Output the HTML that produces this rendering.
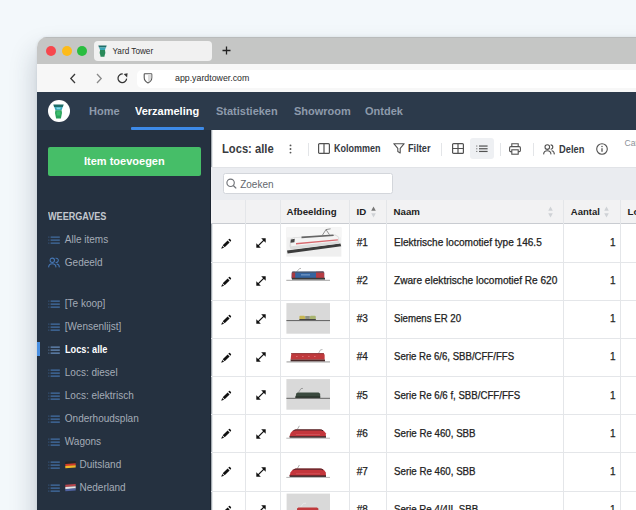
<!DOCTYPE html>
<html><head><meta charset="utf-8">
<style>
*{box-sizing:border-box;margin:0;padding:0}
html,body{width:636px;height:510px;overflow:hidden;background:#f3f8fb;font-family:"Liberation Sans",sans-serif}
.t{position:absolute;white-space:pre;line-height:1}
.r{position:absolute}
svg{position:absolute;overflow:visible}
#win{position:absolute;left:37px;top:37px;width:640px;height:520px;border-radius:10px;overflow:hidden;background:#fff;box-shadow:-2px 14px 26px rgba(30,45,70,.22),0 0 3px rgba(30,40,60,.10)}
#in{position:absolute;left:-37px;top:-37px;width:636px;height:510px}
</style></head><body>
<div id="win"><div id="in">
<div class="r" style="left:37px;top:37px;width:640px;height:27px;background:#c5c6c5;"></div>
<div class="r" style="left:37px;top:37px;width:640px;height:1px;background:#b9bbbb;"></div>
<div class="r" style="left:37px;top:63.5px;width:640px;height:1px;background:#b9b9b9;"></div>
<div class="r" style="left:46.2px;top:45.8px;width:10px;height:10px;border-radius:50%;background:#f7474d"></div>
<div class="r" style="left:61.8px;top:45.8px;width:10px;height:10px;border-radius:50%;background:#fdbb1a"></div>
<div class="r" style="left:77.3px;top:45.8px;width:10px;height:10px;border-radius:50%;background:#29bd3f"></div>
<div class="r" style="left:93.5px;top:41px;width:118.5px;height:20px;background:#f1f1f1;border-radius:4px"></div>
<svg style="left:98.2px;top:44.6px" width="9" height="12" viewBox="0 0 11 15"><path d="M0.3 0.6H10.7L9.9 3H1.1z" fill="#1f6d68"/><path d="M1.3 3H9.7L8.6 6.2H2.4z" fill="#38a7b8"/><path d="M2.4 6.2H8.6Q9.6 9.4 8.3 12.4L7.9 14.6H3.1L2.7 12.4Q1.4 9.4 2.4 6.2z" fill="#2a8a5a"/></svg>
<div class="t" style="left:112.5px;top:47.56px;font-size:8.2px;color:#2b2b2b;font-weight:normal;">Yard Tower</div>
<svg style="left:221.5px;top:46px" width="9" height="9" viewBox="0 0 9 9"><path d="M4.5 0.5v8M0.5 4.5h8" stroke="#222" stroke-width="1.3"/></svg>
<div class="r" style="left:37px;top:64px;width:640px;height:28px;background:#f7f7f7;"></div>
<div class="r" style="left:137px;top:69.5px;width:540px;height:18.5px;background:#ffffff;border-radius:5px"></div>
<div class="r" style="left:37px;top:91.5px;width:640px;height:1px;background:#e2e2e2;"></div>
<svg style="left:69px;top:73px" width="8" height="11" viewBox="0 0 8 11"><path d="M6 1L1.8 5.5L6 10" stroke="#3a3a3a" stroke-width="1.3" fill="none"/></svg>
<svg style="left:95px;top:73px" width="8" height="11" viewBox="0 0 8 11"><path d="M2 1L6.2 5.5L2 10" stroke="#8a8a8a" stroke-width="1.3" fill="none"/></svg>
<svg style="left:117.4px;top:73.2px" width="11" height="11" viewBox="0 0 11 11"><path d="M5.8 1.0A4.3 4.3 0 1 0 9.6 5.6" stroke="#333" stroke-width="1.25" fill="none"/><path d="M6.6 0.9L10.6 0.3L10.1 4.4z" fill="#333"/></svg>
<svg style="left:143px;top:73px" width="10" height="11" viewBox="0 0 10 11"><path d="M5 9.9C7.6 8.8 8.8 7 8.8 4.6V1.4Q8.8 0.8 8.2 0.8H1.8Q1.2 0.8 1.2 1.4V4.6C1.2 7 2.4 8.8 5 9.9z" fill="#fff" stroke="#555" stroke-width="1.1"/><path d="M5 1.3H8.3V4.6C8.3 6.8 7.3 8.3 5 9.3z" fill="#dcdcdc"/></svg>
<div class="t" style="left:175px;top:74.05px;font-size:8.8px;color:#2a2a2a;font-weight:normal;">app.yardtower.com</div>
<div class="r" style="left:37px;top:92px;width:640px;height:38px;background:#2c3a4b;"></div>
<div class="r" style="left:48px;top:100px;width:22px;height:22px;border-radius:50%;background:#fff"></div>
<svg style="left:53px;top:104px" width="11" height="15" viewBox="0 0 11 15"><path d="M0.3 0.6H10.7L9.9 3H1.1z" fill="#1f6d68"/><path d="M1.3 3H9.7L8.6 6.2H2.4z" fill="#38a7b8"/><path d="M3.4 3.6H7.6L7.2 5.2H3.8z" fill="#84d6e4"/><path d="M2.4 6.2H8.6Q9.6 9.4 8.3 12.4L7.9 14.6H3.1L2.7 12.4Q1.4 9.4 2.4 6.2z" fill="#2aa05a"/><path d="M3.6 7.2H7.4Q7.8 9.6 7.1 11.6H3.9Q3.2 9.6 3.6 7.2z" fill="#3cbd6c"/></svg>
<div class="t" style="left:88.5px;top:105.95px;font-size:11.4px;color:#8e9aab;font-weight:bold;transform:scaleX(0.965);transform-origin:0 0">Home</div>
<div class="t" style="left:135.3px;top:105.95px;font-size:11.4px;color:#ffffff;font-weight:bold;transform:scaleX(0.965);transform-origin:0 0">Verzameling</div>
<div class="t" style="left:216.2px;top:105.95px;font-size:11.4px;color:#8e9aab;font-weight:bold;transform:scaleX(0.965);transform-origin:0 0">Statistieken</div>
<div class="t" style="left:293.8px;top:105.95px;font-size:11.4px;color:#8e9aab;font-weight:bold;transform:scaleX(0.965);transform-origin:0 0">Showroom</div>
<div class="t" style="left:365px;top:105.95px;font-size:11.4px;color:#8e9aab;font-weight:bold;transform:scaleX(0.965);transform-origin:0 0">Ontdek</div>
<div class="r" style="left:131px;top:127px;width:73px;height:3px;background:#3d8ae8;border-radius:1px"></div>
<div class="r" style="left:37px;top:130px;width:174px;height:400px;background:#253140;"></div>
<div class="r" style="left:48px;top:146.7px;width:153px;height:29.3px;background:#46be68;border-radius:2px"></div>
<div class="t" style="left:84px;top:156.09px;font-size:11px;color:#ffffff;font-weight:bold;">Item toevoegen</div>
<div class="t" style="left:48.2px;top:211.50px;font-size:10.4px;color:#c3c8cf;font-weight:bold;transform:scaleX(0.875);transform-origin:0 0">WEERGAVES</div>
<svg style="left:48.2px;top:236px" width="12" height="8" viewBox="0 0 12 8"><rect x="0.2" y="0.6000000000000001" width="1.2" height="1" fill="#4a7cb8" opacity="0.55"/><rect x="2.6" y="0.6000000000000001" width="9.2" height="1" fill="#4a7cb8"/><rect x="0.2" y="3.5999999999999996" width="1.2" height="1" fill="#4a7cb8" opacity="0.55"/><rect x="2.6" y="3.5999999999999996" width="9.2" height="1" fill="#4a7cb8"/><rect x="0.2" y="6.6" width="1.2" height="1" fill="#4a7cb8" opacity="0.55"/><rect x="2.6" y="6.6" width="9.2" height="1" fill="#4a7cb8"/></svg>
<div class="t" style="left:64.8px;top:235.03px;font-size:10px;color:#a4acb7;font-weight:normal;">Alle items</div>
<svg style="left:48px;top:257.4px" width="12" height="11" viewBox="0 0 12 11"><g stroke="#4677b5" stroke-width="1.05" fill="none"><circle cx="4.3" cy="3.3" r="2.2"/><path d="M7.6 1.3A2.1 2.1 0 1 1 7.6 5.3"/><path d="M0.6 10.4Q0.8 6.8 4.3 6.8Q7.8 6.8 8 10.4"/><path d="M8.6 6.9Q11.2 7.1 11.4 10.4"/></g></svg>
<div class="t" style="left:64.8px;top:257.54px;font-size:10px;color:#a4acb7;font-weight:normal;">Gedeeld</div>
<svg style="left:48.2px;top:300.0px" width="12" height="8" viewBox="0 0 12 8"><rect x="0.2" y="0.6000000000000001" width="1.2" height="1" fill="#4b80c0" opacity="0.55"/><rect x="2.6" y="0.6000000000000001" width="9.2" height="1" fill="#4b80c0"/><rect x="0.2" y="3.5999999999999996" width="1.2" height="1" fill="#4b80c0" opacity="0.55"/><rect x="2.6" y="3.5999999999999996" width="9.2" height="1" fill="#4b80c0"/><rect x="0.2" y="6.6" width="1.2" height="1" fill="#4b80c0" opacity="0.55"/><rect x="2.6" y="6.6" width="9.2" height="1" fill="#4b80c0"/></svg>
<div class="t" style="left:64.8px;top:298.54px;font-size:10px;color:#a4acb7;font-weight:normal;">[Te koop]</div>
<svg style="left:48.2px;top:323.0px" width="12" height="8" viewBox="0 0 12 8"><rect x="0.2" y="0.6000000000000001" width="1.2" height="1" fill="#4b80c0" opacity="0.55"/><rect x="2.6" y="0.6000000000000001" width="9.2" height="1" fill="#4b80c0"/><rect x="0.2" y="3.5999999999999996" width="1.2" height="1" fill="#4b80c0" opacity="0.55"/><rect x="2.6" y="3.5999999999999996" width="9.2" height="1" fill="#4b80c0"/><rect x="0.2" y="6.6" width="1.2" height="1" fill="#4b80c0" opacity="0.55"/><rect x="2.6" y="6.6" width="9.2" height="1" fill="#4b80c0"/></svg>
<div class="t" style="left:64.8px;top:321.54px;font-size:10px;color:#a4acb7;font-weight:normal;">[Wensenlijst]</div>
<svg style="left:48.2px;top:346.0px" width="12" height="8" viewBox="0 0 12 8"><rect x="0.2" y="0.6000000000000001" width="1.2" height="1" fill="#7aa6dc" opacity="0.55"/><rect x="2.6" y="0.6000000000000001" width="9.2" height="1" fill="#7aa6dc"/><rect x="0.2" y="3.5999999999999996" width="1.2" height="1" fill="#7aa6dc" opacity="0.55"/><rect x="2.6" y="3.5999999999999996" width="9.2" height="1" fill="#7aa6dc"/><rect x="0.2" y="6.6" width="1.2" height="1" fill="#7aa6dc" opacity="0.55"/><rect x="2.6" y="6.6" width="9.2" height="1" fill="#7aa6dc"/></svg>
<div class="t" style="left:64.6px;top:344.54px;font-size:10px;color:#ffffff;font-weight:bold;transform:scaleX(0.92);transform-origin:0 0">Locs: alle</div>
<div class="r" style="left:37px;top:342px;width:2.7px;height:13.5px;background:#4a90e2;"></div>
<svg style="left:48.2px;top:369.0px" width="12" height="8" viewBox="0 0 12 8"><rect x="0.2" y="0.6000000000000001" width="1.2" height="1" fill="#4b80c0" opacity="0.55"/><rect x="2.6" y="0.6000000000000001" width="9.2" height="1" fill="#4b80c0"/><rect x="0.2" y="3.5999999999999996" width="1.2" height="1" fill="#4b80c0" opacity="0.55"/><rect x="2.6" y="3.5999999999999996" width="9.2" height="1" fill="#4b80c0"/><rect x="0.2" y="6.6" width="1.2" height="1" fill="#4b80c0" opacity="0.55"/><rect x="2.6" y="6.6" width="9.2" height="1" fill="#4b80c0"/></svg>
<div class="t" style="left:64.8px;top:367.54px;font-size:10px;color:#a4acb7;font-weight:normal;">Locs: diesel</div>
<svg style="left:48.2px;top:392.0px" width="12" height="8" viewBox="0 0 12 8"><rect x="0.2" y="0.6000000000000001" width="1.2" height="1" fill="#4b80c0" opacity="0.55"/><rect x="2.6" y="0.6000000000000001" width="9.2" height="1" fill="#4b80c0"/><rect x="0.2" y="3.5999999999999996" width="1.2" height="1" fill="#4b80c0" opacity="0.55"/><rect x="2.6" y="3.5999999999999996" width="9.2" height="1" fill="#4b80c0"/><rect x="0.2" y="6.6" width="1.2" height="1" fill="#4b80c0" opacity="0.55"/><rect x="2.6" y="6.6" width="9.2" height="1" fill="#4b80c0"/></svg>
<div class="t" style="left:64.8px;top:390.54px;font-size:10px;color:#a4acb7;font-weight:normal;">Locs: elektrisch</div>
<svg style="left:48.2px;top:415.0px" width="12" height="8" viewBox="0 0 12 8"><rect x="0.2" y="0.6000000000000001" width="1.2" height="1" fill="#4b80c0" opacity="0.55"/><rect x="2.6" y="0.6000000000000001" width="9.2" height="1" fill="#4b80c0"/><rect x="0.2" y="3.5999999999999996" width="1.2" height="1" fill="#4b80c0" opacity="0.55"/><rect x="2.6" y="3.5999999999999996" width="9.2" height="1" fill="#4b80c0"/><rect x="0.2" y="6.6" width="1.2" height="1" fill="#4b80c0" opacity="0.55"/><rect x="2.6" y="6.6" width="9.2" height="1" fill="#4b80c0"/></svg>
<div class="t" style="left:64.8px;top:413.54px;font-size:10px;color:#a4acb7;font-weight:normal;">Onderhoudsplan</div>
<svg style="left:48.2px;top:438.0px" width="12" height="8" viewBox="0 0 12 8"><rect x="0.2" y="0.6000000000000001" width="1.2" height="1" fill="#4b80c0" opacity="0.55"/><rect x="2.6" y="0.6000000000000001" width="9.2" height="1" fill="#4b80c0"/><rect x="0.2" y="3.5999999999999996" width="1.2" height="1" fill="#4b80c0" opacity="0.55"/><rect x="2.6" y="3.5999999999999996" width="9.2" height="1" fill="#4b80c0"/><rect x="0.2" y="6.6" width="1.2" height="1" fill="#4b80c0" opacity="0.55"/><rect x="2.6" y="6.6" width="9.2" height="1" fill="#4b80c0"/></svg>
<div class="t" style="left:64.8px;top:436.54px;font-size:10px;color:#a4acb7;font-weight:normal;">Wagons</div>
<svg style="left:48.2px;top:461.0px" width="12" height="8" viewBox="0 0 12 8"><rect x="0.2" y="0.6000000000000001" width="1.2" height="1" fill="#4b80c0" opacity="0.55"/><rect x="2.6" y="0.6000000000000001" width="9.2" height="1" fill="#4b80c0"/><rect x="0.2" y="3.5999999999999996" width="1.2" height="1" fill="#4b80c0" opacity="0.55"/><rect x="2.6" y="3.5999999999999996" width="9.2" height="1" fill="#4b80c0"/><rect x="0.2" y="6.6" width="1.2" height="1" fill="#4b80c0" opacity="0.55"/><rect x="2.6" y="6.6" width="9.2" height="1" fill="#4b80c0"/></svg>
<svg style="left:65px;top:460.6px" width="11" height="7.5" viewBox="0 0 11 7.5"><g transform="skewY(-4) translate(0 0.6)"><rect x="0.3" y="0.2" width="10.4" height="2.2" fill="#262626"/><rect x="0.3" y="2.35" width="10.4" height="2.2" fill="#d23a2a"/><rect x="0.3" y="4.5" width="10.4" height="2.2" fill="#f0b828"/></g></svg>
<div class="t" style="left:79.5px;top:459.54px;font-size:10px;color:#a4acb7;font-weight:normal;">Duitsland</div>
<svg style="left:48.2px;top:484.0px" width="12" height="8" viewBox="0 0 12 8"><rect x="0.2" y="0.6000000000000001" width="1.2" height="1" fill="#4b80c0" opacity="0.55"/><rect x="2.6" y="0.6000000000000001" width="9.2" height="1" fill="#4b80c0"/><rect x="0.2" y="3.5999999999999996" width="1.2" height="1" fill="#4b80c0" opacity="0.55"/><rect x="2.6" y="3.5999999999999996" width="9.2" height="1" fill="#4b80c0"/><rect x="0.2" y="6.6" width="1.2" height="1" fill="#4b80c0" opacity="0.55"/><rect x="2.6" y="6.6" width="9.2" height="1" fill="#4b80c0"/></svg>
<svg style="left:65px;top:483.6px" width="11" height="7.5" viewBox="0 0 11 7.5"><g transform="skewY(-4) translate(0 0.6)"><rect x="0.3" y="0.2" width="10.4" height="2.2" fill="#b8454c"/><rect x="0.3" y="2.35" width="10.4" height="2.2" fill="#e6e6e6"/><rect x="0.3" y="4.5" width="10.4" height="2.2" fill="#4f62a0"/></g></svg>
<div class="t" style="left:79.5px;top:482.54px;font-size:10px;color:#a4acb7;font-weight:normal;">Nederland</div>
<div class="r" style="left:211px;top:130px;width:430px;height:400px;background:#ffffff;"></div>
<div class="r" style="left:209.5px;top:130px;width:1.5px;height:400px;background:#1c2430;"></div>
<div class="r" style="left:211px;top:130px;width:1px;height:400px;background:#a3aab0;"></div>
<div class="r" style="left:212px;top:130px;width:1px;height:400px;background:rgba(200,206,212,.45);"></div>
<div class="t" style="left:222.2px;top:143.19px;font-size:12.3px;color:#383b40;font-weight:bold;transform:scaleX(0.91);transform-origin:0 0">Locs: alle</div>
<svg style="left:289px;top:143.5px" width="3" height="10" viewBox="0 0 3 10"><circle cx="1.5" cy="1.4" r="0.95" fill="#555"/><circle cx="1.5" cy="5" r="0.95" fill="#555"/><circle cx="1.5" cy="8.6" r="0.95" fill="#555"/></svg>
<div class="r" style="left:307.5px;top:142.5px;width:1px;height:13px;background:#e3e5e8;"></div>
<div class="r" style="left:441.2px;top:142.5px;width:1px;height:13px;background:#e3e5e8;"></div>
<div class="r" style="left:499.5px;top:142.5px;width:1px;height:13px;background:#e3e5e8;"></div>
<div class="r" style="left:532.8px;top:142.5px;width:1px;height:13px;background:#e3e5e8;"></div>
<svg style="left:318.4px;top:143.4px" width="12" height="11" viewBox="0 0 12 11"><rect x="0.6" y="0.6" width="10.8" height="9.8" rx="1" stroke="#525252" stroke-width="1.2" fill="none"/><path d="M6 0.6v9.8" stroke="#525252" stroke-width="1.2"/></svg>
<div class="t" style="left:333.8px;top:144.44px;font-size:10px;color:#35393f;font-weight:bold;transform:scaleX(0.90);transform-origin:0 0">Kolommen</div>
<svg style="left:392.5px;top:143.4px" width="12" height="11" viewBox="0 0 12 11"><path d="M0.8 0.7h10.4L7.2 5.4v4.6L4.8 8.6V5.4z" stroke="#525252" stroke-width="1.1" fill="none" stroke-linejoin="round"/></svg>
<div class="t" style="left:407.5px;top:144.44px;font-size:10px;color:#35393f;font-weight:bold;transform:scaleX(0.92);transform-origin:0 0">Filter</div>
<svg style="left:452.3px;top:143.4px" width="12" height="11" viewBox="0 0 12 11"><rect x="0.6" y="0.6" width="10.8" height="9.8" rx="1" stroke="#525252" stroke-width="1.2" fill="none"/><path d="M6 0.6v9.8M0.6 5.5h10.8" stroke="#525252" stroke-width="1.2"/></svg>
<div class="r" style="left:470.2px;top:137.5px;width:23.8px;height:21.5px;background:#eef0f3;border-radius:3px"></div>
<svg style="left:476px;top:145px" width="12" height="8" viewBox="0 0 12 8"><g fill="#525252"><rect x="0" y="0.5" width="1.4" height="1.1" opacity="0.6"/><rect x="3" y="0.45" width="8.6" height="1.2"/><rect x="0" y="3.2" width="1.4" height="1.1" opacity="0.6"/><rect x="3" y="3.15" width="8.6" height="1.2"/><rect x="0" y="5.9" width="1.4" height="1.1" opacity="0.6"/><rect x="3" y="5.85" width="8.6" height="1.2"/></g></svg>
<svg style="left:509.3px;top:143px" width="12" height="12" viewBox="0 0 12 12"><path d="M2.8 3.6V0.8h6.4v2.8" stroke="#525252" stroke-width="1.1" fill="none"/><rect x="0.6" y="3.6" width="10.8" height="5" rx="1.2" stroke="#525252" stroke-width="1.1" fill="none"/><rect x="2.8" y="6.8" width="6.4" height="4.4" stroke="#525252" stroke-width="1.1" fill="#fff"/></svg>
<svg style="left:543.2px;top:143.6px" width="12" height="11" viewBox="0 0 12 11"><g stroke="#525252" stroke-width="1.1" fill="none"><circle cx="4.3" cy="3.1" r="2.3"/><path d="M7.6 0.9A2.2 2.2 0 1 1 7.6 5.3"/><path d="M0.6 10.4Q0.8 6.7 4.3 6.7Q7.8 6.7 8 10.4"/><path d="M8.6 6.8Q11.2 7 11.4 10.4"/></g></svg>
<div class="t" style="left:558.6px;top:145.03px;font-size:10px;color:#35393f;font-weight:bold;transform:scaleX(0.93);transform-origin:0 0">Delen</div>
<svg style="left:595.6px;top:143.2px" width="12" height="12" viewBox="0 0 12 12"><circle cx="6" cy="6" r="5.3" stroke="#525252" stroke-width="1.1" fill="none"/><path d="M6 5.2v3.6" stroke="#525252" stroke-width="1.3"/><circle cx="6" cy="3.4" r="0.75" fill="#525252"/></svg>
<div class="t" style="left:624.5px;top:138.92px;font-size:8.6px;color:#8c9198;font-weight:normal;">Cat</div>
<div class="r" style="left:211px;top:167.4px;width:430px;height:32.8px;background:#eaecf0;"></div>
<div class="r" style="left:211px;top:167.4px;width:430px;height:1px;background:#e1e3e7;"></div>
<div class="r" style="left:222.6px;top:173.4px;width:170.8px;height:20.6px;background:#ffffff;border:1px solid #d3d6db;border-radius:2.5px"></div>
<svg style="left:226px;top:178px" width="11" height="11" viewBox="0 0 11 11"><circle cx="4.6" cy="4.8" r="3.7" stroke="#707378" stroke-width="1.15" fill="none"/><path d="M7.3 7.5L10.2 10.4" stroke="#707378" stroke-width="1.3"/></svg>
<div class="t" style="left:240.2px;top:179.84px;font-size:10px;color:#63676d;font-weight:normal;">Zoeken</div>
<div class="r" style="left:211px;top:200.2px;width:430px;height:23.3px;background:#f2f2f3;"></div>
<div class="r" style="left:211px;top:222.5px;width:430px;height:1.4px;background:#c9ccd1;"></div>
<div class="t" style="left:286.5px;top:206.59px;font-size:9.7px;color:#222;font-weight:bold;">Afbeelding</div>
<div class="t" style="left:356.6px;top:206.59px;font-size:9.7px;color:#222;font-weight:bold;">ID</div>
<svg style="left:370.5px;top:205.5px" width="5" height="12" viewBox="0 0 5 12"><path d="M2.5 0.5L4.8 4.8H0.2z" fill="#777"/><path d="M2.5 11.5L4.8 7.2H0.2z" fill="#cfd2d6"/></svg>
<div class="t" style="left:393.6px;top:206.59px;font-size:9.7px;color:#222;font-weight:bold;">Naam</div>
<svg style="left:547.5px;top:205.5px" width="5" height="12" viewBox="0 0 5 12"><path d="M2.5 0.5L4.8 4.8H0.2z" fill="#cfd2d6"/><path d="M2.5 11.5L4.8 7.2H0.2z" fill="#cfd2d6"/></svg>
<div class="t" style="left:570.8px;top:206.76px;font-size:9.5px;color:#222;font-weight:bold;">Aantal</div>
<svg style="left:604.3px;top:205.5px" width="5" height="12" viewBox="0 0 5 12"><path d="M2.5 0.5L4.8 4.8H0.2z" fill="#cfd2d6"/><path d="M2.5 11.5L4.8 7.2H0.2z" fill="#cfd2d6"/></svg>
<div class="t" style="left:627.6px;top:206.59px;font-size:9.7px;color:#222;font-weight:bold;">Lo</div>
<svg style="left:220.6px;top:238.50px" width="10" height="10" viewBox="0 0 10 10"><path d="M1.7 6.3L6.6 1.4L8.6 3.4L3.7 8.3z" fill="#111"/><path d="M1.3 6.9L3.1 8.7L0.2 9.8z" fill="#111"/><path d="M7.3 0.7L8 0Q8.5 -0.4 9 0.1L9.9 1Q10.4 1.5 10 2L9.3 2.7z" fill="#111"/></svg>
<svg style="left:255.7px;top:237.80px" width="10" height="10" viewBox="0 0 10 10"><path d="M1.6 8.4L8.4 1.6" stroke="#111" stroke-width="1.3"/><path d="M5.2 0.3H9.7V4.8z" fill="#111"/><path d="M0.3 5.2V9.7H4.8z" fill="#111"/></svg>
<div class="t" style="left:356.7px;top:237.94px;font-size:10px;color:#222;font-weight:normal;-webkit-text-stroke:0.25px #222">#1</div>
<div class="t" style="left:393.7px;top:237.94px;font-size:10px;color:#222;font-weight:normal;-webkit-text-stroke:0.25px #222;transform:scaleX(1.007);transform-origin:0 0">Elektrische locomotief type 146.5</div>
<div class="t" style="left:610px;top:237.94px;font-size:10px;color:#222;font-weight:normal;-webkit-text-stroke:0.25px #222">1</div>
<div class="r" style="left:211px;top:261.56px;width:430px;height:1px;background:#e4e6e9;"></div>
<svg style="left:220.6px;top:276.66px" width="10" height="10" viewBox="0 0 10 10"><path d="M1.7 6.3L6.6 1.4L8.6 3.4L3.7 8.3z" fill="#111"/><path d="M1.3 6.9L3.1 8.7L0.2 9.8z" fill="#111"/><path d="M7.3 0.7L8 0Q8.5 -0.4 9 0.1L9.9 1Q10.4 1.5 10 2L9.3 2.7z" fill="#111"/></svg>
<svg style="left:255.7px;top:275.96px" width="10" height="10" viewBox="0 0 10 10"><path d="M1.6 8.4L8.4 1.6" stroke="#111" stroke-width="1.3"/><path d="M5.2 0.3H9.7V4.8z" fill="#111"/><path d="M0.3 5.2V9.7H4.8z" fill="#111"/></svg>
<div class="t" style="left:356.7px;top:276.10px;font-size:10px;color:#222;font-weight:normal;-webkit-text-stroke:0.25px #222">#2</div>
<div class="t" style="left:393.7px;top:276.10px;font-size:10px;color:#222;font-weight:normal;-webkit-text-stroke:0.25px #222;transform:scaleX(1.010);transform-origin:0 0">Zware elektrische locomotief Re 620</div>
<div class="t" style="left:610px;top:276.10px;font-size:10px;color:#222;font-weight:normal;-webkit-text-stroke:0.25px #222">1</div>
<div class="r" style="left:211px;top:299.72px;width:430px;height:1px;background:#e4e6e9;"></div>
<svg style="left:220.6px;top:314.82px" width="10" height="10" viewBox="0 0 10 10"><path d="M1.7 6.3L6.6 1.4L8.6 3.4L3.7 8.3z" fill="#111"/><path d="M1.3 6.9L3.1 8.7L0.2 9.8z" fill="#111"/><path d="M7.3 0.7L8 0Q8.5 -0.4 9 0.1L9.9 1Q10.4 1.5 10 2L9.3 2.7z" fill="#111"/></svg>
<svg style="left:255.7px;top:314.12px" width="10" height="10" viewBox="0 0 10 10"><path d="M1.6 8.4L8.4 1.6" stroke="#111" stroke-width="1.3"/><path d="M5.2 0.3H9.7V4.8z" fill="#111"/><path d="M0.3 5.2V9.7H4.8z" fill="#111"/></svg>
<div class="t" style="left:356.7px;top:314.26px;font-size:10px;color:#222;font-weight:normal;-webkit-text-stroke:0.25px #222">#3</div>
<div class="t" style="left:393.7px;top:314.26px;font-size:10px;color:#222;font-weight:normal;-webkit-text-stroke:0.25px #222;transform:scaleX(0.965);transform-origin:0 0">Siemens ER 20</div>
<div class="t" style="left:610px;top:314.26px;font-size:10px;color:#222;font-weight:normal;-webkit-text-stroke:0.25px #222">1</div>
<div class="r" style="left:211px;top:337.88px;width:430px;height:1px;background:#e4e6e9;"></div>
<svg style="left:220.6px;top:352.98px" width="10" height="10" viewBox="0 0 10 10"><path d="M1.7 6.3L6.6 1.4L8.6 3.4L3.7 8.3z" fill="#111"/><path d="M1.3 6.9L3.1 8.7L0.2 9.8z" fill="#111"/><path d="M7.3 0.7L8 0Q8.5 -0.4 9 0.1L9.9 1Q10.4 1.5 10 2L9.3 2.7z" fill="#111"/></svg>
<svg style="left:255.7px;top:352.28px" width="10" height="10" viewBox="0 0 10 10"><path d="M1.6 8.4L8.4 1.6" stroke="#111" stroke-width="1.3"/><path d="M5.2 0.3H9.7V4.8z" fill="#111"/><path d="M0.3 5.2V9.7H4.8z" fill="#111"/></svg>
<div class="t" style="left:356.7px;top:352.42px;font-size:10px;color:#222;font-weight:normal;-webkit-text-stroke:0.25px #222">#4</div>
<div class="t" style="left:393.7px;top:352.42px;font-size:10px;color:#222;font-weight:normal;-webkit-text-stroke:0.25px #222;transform:scaleX(0.960);transform-origin:0 0">Serie Re 6/6, SBB/CFF/FFS</div>
<div class="t" style="left:610px;top:352.42px;font-size:10px;color:#222;font-weight:normal;-webkit-text-stroke:0.25px #222">1</div>
<div class="r" style="left:211px;top:376.03999999999996px;width:430px;height:1px;background:#e4e6e9;"></div>
<svg style="left:220.6px;top:391.14px" width="10" height="10" viewBox="0 0 10 10"><path d="M1.7 6.3L6.6 1.4L8.6 3.4L3.7 8.3z" fill="#111"/><path d="M1.3 6.9L3.1 8.7L0.2 9.8z" fill="#111"/><path d="M7.3 0.7L8 0Q8.5 -0.4 9 0.1L9.9 1Q10.4 1.5 10 2L9.3 2.7z" fill="#111"/></svg>
<svg style="left:255.7px;top:390.44px" width="10" height="10" viewBox="0 0 10 10"><path d="M1.6 8.4L8.4 1.6" stroke="#111" stroke-width="1.3"/><path d="M5.2 0.3H9.7V4.8z" fill="#111"/><path d="M0.3 5.2V9.7H4.8z" fill="#111"/></svg>
<div class="t" style="left:356.7px;top:390.57px;font-size:10px;color:#222;font-weight:normal;-webkit-text-stroke:0.25px #222">#5</div>
<div class="t" style="left:393.7px;top:390.57px;font-size:10px;color:#222;font-weight:normal;-webkit-text-stroke:0.25px #222;transform:scaleX(0.966);transform-origin:0 0">Serie Re 6/6 f, SBB/CFF/FFS</div>
<div class="t" style="left:610px;top:390.57px;font-size:10px;color:#222;font-weight:normal;-webkit-text-stroke:0.25px #222">1</div>
<div class="r" style="left:211px;top:414.2px;width:430px;height:1px;background:#e4e6e9;"></div>
<svg style="left:220.6px;top:429.30px" width="10" height="10" viewBox="0 0 10 10"><path d="M1.7 6.3L6.6 1.4L8.6 3.4L3.7 8.3z" fill="#111"/><path d="M1.3 6.9L3.1 8.7L0.2 9.8z" fill="#111"/><path d="M7.3 0.7L8 0Q8.5 -0.4 9 0.1L9.9 1Q10.4 1.5 10 2L9.3 2.7z" fill="#111"/></svg>
<svg style="left:255.7px;top:428.60px" width="10" height="10" viewBox="0 0 10 10"><path d="M1.6 8.4L8.4 1.6" stroke="#111" stroke-width="1.3"/><path d="M5.2 0.3H9.7V4.8z" fill="#111"/><path d="M0.3 5.2V9.7H4.8z" fill="#111"/></svg>
<div class="t" style="left:356.7px;top:428.74px;font-size:10px;color:#222;font-weight:normal;-webkit-text-stroke:0.25px #222">#6</div>
<div class="t" style="left:393.7px;top:428.74px;font-size:10px;color:#222;font-weight:normal;-webkit-text-stroke:0.25px #222;transform:scaleX(0.972);transform-origin:0 0">Serie Re 460, SBB</div>
<div class="t" style="left:610px;top:428.74px;font-size:10px;color:#222;font-weight:normal;-webkit-text-stroke:0.25px #222">1</div>
<div class="r" style="left:211px;top:452.36px;width:430px;height:1px;background:#e4e6e9;"></div>
<svg style="left:220.6px;top:467.46px" width="10" height="10" viewBox="0 0 10 10"><path d="M1.7 6.3L6.6 1.4L8.6 3.4L3.7 8.3z" fill="#111"/><path d="M1.3 6.9L3.1 8.7L0.2 9.8z" fill="#111"/><path d="M7.3 0.7L8 0Q8.5 -0.4 9 0.1L9.9 1Q10.4 1.5 10 2L9.3 2.7z" fill="#111"/></svg>
<svg style="left:255.7px;top:466.76px" width="10" height="10" viewBox="0 0 10 10"><path d="M1.6 8.4L8.4 1.6" stroke="#111" stroke-width="1.3"/><path d="M5.2 0.3H9.7V4.8z" fill="#111"/><path d="M0.3 5.2V9.7H4.8z" fill="#111"/></svg>
<div class="t" style="left:356.7px;top:466.90px;font-size:10px;color:#222;font-weight:normal;-webkit-text-stroke:0.25px #222">#7</div>
<div class="t" style="left:393.7px;top:466.90px;font-size:10px;color:#222;font-weight:normal;-webkit-text-stroke:0.25px #222;transform:scaleX(0.972);transform-origin:0 0">Serie Re 460, SBB</div>
<div class="t" style="left:610px;top:466.90px;font-size:10px;color:#222;font-weight:normal;-webkit-text-stroke:0.25px #222">1</div>
<div class="r" style="left:211px;top:490.52px;width:430px;height:1px;background:#e4e6e9;"></div>
<svg style="left:220.6px;top:505.62px" width="10" height="10" viewBox="0 0 10 10"><path d="M1.7 6.3L6.6 1.4L8.6 3.4L3.7 8.3z" fill="#111"/><path d="M1.3 6.9L3.1 8.7L0.2 9.8z" fill="#111"/><path d="M7.3 0.7L8 0Q8.5 -0.4 9 0.1L9.9 1Q10.4 1.5 10 2L9.3 2.7z" fill="#111"/></svg>
<svg style="left:255.7px;top:504.92px" width="10" height="10" viewBox="0 0 10 10"><path d="M1.6 8.4L8.4 1.6" stroke="#111" stroke-width="1.3"/><path d="M5.2 0.3H9.7V4.8z" fill="#111"/><path d="M0.3 5.2V9.7H4.8z" fill="#111"/></svg>
<div class="t" style="left:356.7px;top:505.06px;font-size:10px;color:#222;font-weight:normal;-webkit-text-stroke:0.25px #222">#8</div>
<div class="t" style="left:393.7px;top:505.06px;font-size:10px;color:#222;font-weight:normal;-webkit-text-stroke:0.25px #222;transform:scaleX(0.970);transform-origin:0 0">Serie Re 4/4II, SBB</div>
<div class="t" style="left:610px;top:505.06px;font-size:10px;color:#222;font-weight:normal;-webkit-text-stroke:0.25px #222">1</div>
<div class="r" style="left:245.1px;top:200.2px;width:1px;height:330px;background:#e4e6e9;"></div>
<div class="r" style="left:279.5px;top:200.2px;width:1px;height:330px;background:#e4e6e9;"></div>
<div class="r" style="left:349.1px;top:200.2px;width:1px;height:330px;background:#e4e6e9;"></div>
<div class="r" style="left:385.6px;top:200.2px;width:1px;height:330px;background:#e4e6e9;"></div>
<div class="r" style="left:563.0px;top:200.2px;width:1px;height:330px;background:#e4e6e9;"></div>
<div class="r" style="left:620.1px;top:200.2px;width:1px;height:330px;background:#e4e6e9;"></div>
<svg style="left:283px;top:224px" width="62" height="36" viewBox="283 224 62 36"><rect x="286.4" y="227.4" width="55" height="29.2" fill="#efefef"/><rect x="286.4" y="227.4" width="55" height="10" fill="#f6f6f6"/><path d="M287 250.4L340.4 243.6L341.2 246.2L287.6 253.6z" fill="#3c3c3c"/><path d="M290.4 238.8L293.6 237.2L335.4 234.6L338.6 236.6L339.4 243.4L290.6 249.6L289.4 246z" fill="#dcdcdc"/><path d="M291.2 239.4L293.8 238L335 235.4L337.8 237L338.4 241.2L291.2 246.2z" fill="#f4f4f4"/><path d="M301.5 236.4L333.4 234.4L333.8 236L301.5 238.2z" fill="#666"/><path d="M296 243L337.8 239.2L337.9 240.6L296 244.4z" fill="#d86a70"/><path d="M290.9 239.4L294.8 238.8L294.4 242.2L290.5 242.8z" fill="#444"/><path d="M322.5 235L326 229.6L330.6 228.8M326 229.6L329.4 234.6" stroke="#666" stroke-width="0.7" fill="none"/></svg>
<svg style="left:283px;top:262px" width="52" height="22" viewBox="283 262 52 22"><rect x="286.3" y="279.8" width="43.7" height="1" fill="#a5a5a5"/><path d="M296.5 272L299.5 268.6L301 268.4" stroke="#888" stroke-width="0.6" fill="none"/><path d="M291.8 272.6L293 271.8L323 271.6L324.2 272.8V278.6H291.6z" fill="#3565a0"/><path d="M291.8 272.6L293 271.8L295.2 271.8V278.6H291.6z" fill="#a83a42"/><path d="M316 271.7L323 271.6L324.2 272.8V278.6H316z" fill="#b63c44"/><rect x="292" y="271.6" width="32" height="1" fill="#505560"/><rect x="292" y="277.8" width="33" height="1.8" fill="#3a3a3a"/><rect x="301" y="274" width="9" height="1.6" fill="#9dbde0" opacity="0.45"/></svg>
<svg style="left:283px;top:300px" width="52" height="36" viewBox="283 300 52 36"><rect x="286.4" y="303.1" width="43.6" height="30.6" fill="#d9d9d9"/><rect x="286.4" y="320" width="43.6" height="1.1" fill="#6a6a6a"/><rect x="299.4" y="315.8" width="5.6" height="4.2" rx="1" fill="#c6b654"/><rect x="305.2" y="316" width="4.6" height="4" fill="#8d9184"/><rect x="310" y="315.8" width="5.8" height="4.2" rx="1" fill="#a8b470"/><rect x="299.4" y="319" width="16.4" height="1" fill="#444"/></svg>
<svg style="left:283px;top:345px" width="52" height="20" viewBox="283 345 52 20"><rect x="286.5" y="361.3" width="43.5" height="1.2" fill="#a8a8a8"/><path d="M318.5 353.4L320.5 349.8L322.5 349.6" stroke="#888" stroke-width="0.6" fill="none"/><path d="M291.2 354.2L293 353.4H323L324.6 354.4V359.8H290.6z" fill="#c03a3d"/><rect x="291" y="353.2" width="33" height="0.9" fill="#8a2a2d"/><rect x="290.6" y="359.6" width="34.4" height="1.7" fill="#4a2a2a"/><g fill="#e88a8a" opacity="0.6"><rect x="296" y="356" width="1.6" height="1"/><rect x="302" y="356" width="1.6" height="1"/><rect x="308" y="356" width="1.6" height="1"/><rect x="314" y="356" width="1.6" height="1"/></g></svg>
<svg style="left:283px;top:376px" width="52" height="36" viewBox="283 376 52 36"><rect x="286.4" y="379.1" width="43.6" height="30.6" fill="#d9d9d9"/><rect x="286.4" y="397.8" width="43.6" height="1.1" fill="#6f6f6f"/><path d="M298.5 392.4L301 388.6L303 388.4" stroke="#777" stroke-width="0.6" fill="none"/><path d="M296.2 393.6L297.6 392.4H318.6L320.2 393.8V397.8H295.4z" fill="#3b4a3f"/><rect x="295.4" y="396.4" width="24.8" height="1.4" fill="#283028"/></svg>
<svg style="left:283px;top:422px" width="52" height="20" viewBox="283 422 52 20"><rect x="286.3" y="437.7" width="43.7" height="1" fill="#b5b5b5"/><path d="M297.2 429.6L299.4 425.8" stroke="#888" stroke-width="0.7" fill="none"/><path d="M289.4 436.8L290.6 433.0Q292.2 430.0 295.6 429.4H320.4Q323.6 429.6 325.8 433.2L326 436.8H289.4z" fill="#c4363c"/><path d="M293.4 430.8Q294.6 430.0 296 429.9H320.2Q322 429.9 323 430.8" stroke="#3e2327" stroke-width="1" fill="none"/><rect x="289.6" y="436.2" width="36.4" height="1.5" fill="#3a2426"/><rect x="296" y="434.2" width="24" height="0.8" fill="#e27a80" opacity="0.5"/></svg>
<svg style="left:283px;top:462px" width="52" height="20" viewBox="283 462 52 20"><rect x="286.3" y="476.9" width="43.7" height="1" fill="#b5b5b5"/><path d="M297.2 468.8L299.4 465.0" stroke="#888" stroke-width="0.7" fill="none"/><path d="M289.4 476.0L290.6 472.2Q292.2 469.2 295.6 468.6H320.4Q323.6 468.8 325.8 472.4L326 476.0H289.4z" fill="#c4363c"/><path d="M293.4 470.0Q294.6 469.2 296 469.1H320.2Q322 469.1 323 470.0" stroke="#3e2327" stroke-width="1" fill="none"/><rect x="289.6" y="475.4" width="36.4" height="1.5" fill="#3a2426"/><rect x="296" y="473.4" width="24" height="0.8" fill="#e27a80" opacity="0.5"/></svg>
<svg style="left:283px;top:490px" width="52" height="20" viewBox="283 490 52 20"><rect x="286.6" y="493.6" width="43.4" height="30" fill="#d9d9d9"/><path d="M300.5 507.2L303.5 503.4L306 503.2" stroke="#eee" stroke-width="0.7" fill="none"/><path d="M297 508.4L298.4 507.4H317L318.4 508.4V512H297z" fill="#c03a3d"/></svg>
</div></div></body></html>
